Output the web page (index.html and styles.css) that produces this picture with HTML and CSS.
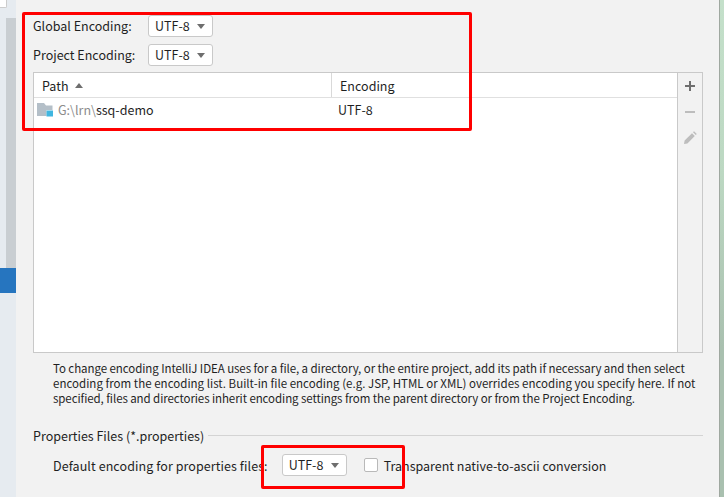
FILE: index.html
```html
<!DOCTYPE html>
<html lang="en">
<head>
<meta charset="utf-8">
<title>File Encodings</title>
<link rel="stylesheet" href="styles.css">
</head>
<body>
<div class="window">
  <aside class="sidebar">
    <div class="corner-box"></div>
    <div class="side-scroll"></div>
    <div class="side-selected"></div>
  </aside>
  <main class="panel">
    <div class="enc-row first">
      <span class="enc-label">Global Encoding:</span>
      <span class="combo"><span>UTF-8</span><i class="caret"></i></span>
    </div>
    <div class="enc-row second">
      <span class="enc-label">Project Encoding:</span>
      <span class="combo"><span>UTF-8</span><i class="caret"></i></span>
    </div>
    <section class="table-box">
      <div class="table">
        <div class="thead">
          <div class="th col-path">Path <i class="sort-up"></i></div>
          <div class="th col-enc">Encoding</div>
        </div>
        <div class="tr">
          <div class="td col-path">
            <svg class="folder" width="16" height="16" viewBox="0 0 16 16">
              <path d="M0 1h7l2 2.500h6.500V8H9.500v6H0z" fill="#b4bfc8"/>
              <rect x="9.500" y="8.500" width="6.500" height="6" fill="#40b6e0"/>
            </svg>
            <span><span class="dim">G:\lrn\</span>ssq-demo</span>
          </div>
          <div class="td col-enc">UTF-8</div>
        </div>
      </div>
      <div class="toolbar">
        <svg class="tool" width="16" height="16" viewBox="0 0 16 16"><path d="M7 3h2v4h4v2H9v4H7V9H3V7h4z" fill="#6e6e6e"/></svg>
        <svg class="tool" width="16" height="16" viewBox="0 0 16 16"><rect x="3" y="7" width="10" height="2" fill="#bdbdbd"/></svg>
        <svg class="tool" width="16" height="16" viewBox="0 0 16 16"><path d="M2 14l.6-3.400L10 3.200l2.800 2.800L5.400 13.400zM11 2.200l1-1 2.800 2.800-1 1z" fill="#bdbdbd"/></svg>
      </div>
    </section>
    <div class="help">
      <div class="line-a">To change encoding IntelliJ IDEA uses for a file, a directory, or the entire project, add its path if necessary and then select</div>
      <div class="line-b">encoding from the encoding list. Built-in file encoding (e.g. JSP, HTML or XML) overrides encoding you specify here. If not</div>
      <div class="line-c">specified, files and directories inherit encoding settings from the parent directory or from the Project Encoding.</div>
    </div>
    <div class="group-title"><span>Properties Files (*.properties)</span><div class="rule"></div></div>
    <div class="props-row">
      <span class="props-label">Default encoding for properties files:</span>
      <span class="combo"><span>UTF-8</span><i class="caret"></i></span>
      <span class="check"></span>
      <span>Transparent native-to-ascii conversion</span>
    </div>
  </main>
  <div class="edge"></div>
  <div class="mark mark-top"></div>
  <div class="mark mark-bottom"></div>
</div>
</body>
</html>
```
FILE: styles.css
```css
* { box-sizing: border-box; }
html, body { margin: 0; height: 100%; }
body { font-family: "Noto Sans CJK SC", "Noto Sans", sans-serif; font-size: 12.5px; color: #1f1f1f; background: #f2f2f2; overflow: hidden; }
.window { position: relative; display: flex; width: 724px; height: 497px; }
.sidebar { position: relative; width: 16px; background: #e6ebf0; flex: none; }
.corner-box { position: absolute; left: 0; top: 0; width: 7px; height: 8px; background: #fff; border: 1px solid #ccc; border-left: 0; border-top: 0; border-radius: 0 0 2px 0; }
.side-scroll { position: absolute; left: 6px; top: 18px; width: 10px; height: 257px; background: #c9ced2; }
.side-selected { position: absolute; left: 0; top: 268px; width: 16px; height: 25px; background: #2675bf; }
.panel { flex: none; width: 703px; padding: 0 0 0 17px; }
.enc-row { display: flex; align-items: center; height: 22px; margin-bottom: 7px; }
.enc-row.first { margin-top: 15px; }
.enc-row.second { margin-bottom: 6px; }
.enc-label { width: 115px; padding-bottom: 2px; }
.combo { display: inline-flex; align-items: center; justify-content: space-between; width: 65px; height: 22px; padding: 0 7px 2px 6px; background: #fff; border: 1px solid #c9c9c9; border-radius: 3px; }
.caret { width: 0; height: 0; margin-top: 2px; border-left: 4.5px solid transparent; border-right: 4.5px solid transparent; border-top: 5px solid #6e6e6e; }
.table-box { display: flex; width: 670px; height: 281px; border: 1px solid #c9c9c9; }
.table { flex: 1; background: #fff; }
.thead { display: flex; height: 25px; border-bottom: 1px solid #e0e0e0; }
.th { display: flex; align-items: center; height: 24px; padding-left: 8px; }
.thead .col-path { width: 298px; border-right: 1px solid #d9d9d9; gap: 5px; }
.sort-up { width: 0; height: 0; border-left: 4.5px solid transparent; border-right: 4.5px solid transparent; border-bottom: 5px solid #6e6e6e; margin-left: 2px; }
.tr { display: flex; height: 23px; align-items: center; }
.td.col-path { width: 298px; display: flex; align-items: center; padding-left: 3px; white-space: pre; }
.td.col-enc { padding-left: 6px; }
.folder { margin-right: 5px; flex: none; }
.dim { color: #8c8c8c; }
.toolbar { flex: none; width: 25px; border-left: 1px solid #c9c9c9; display: flex; flex-direction: column; align-items: center; padding-top: 5px; gap: 10px; }
.tool { display: block; }
.help { margin: 8px 0 0 20px; font-size: 11.5px; line-height: 15px; white-space: nowrap; }
.line-a { letter-spacing: -0.07px; }
.line-b { letter-spacing: 0.02px; }
.line-c { letter-spacing: -0.08px; }
.group-title { display: flex; align-items: center; gap: 4px; width: 670px; margin-top: 20px; height: 18px; }
.rule { flex: 1; height: 1px; background: #d4d4d4; }
.props-row { display: flex; align-items: center; height: 22px; margin-top: 10px; padding-left: 20px; }
.props-label { letter-spacing: 0.08px; }
.props-row .combo { margin-left: 14px; }
.check { width: 14px; height: 14px; margin: 0 6px 0 17px; background: #fff; border: 1px solid #b9b9b9; border-radius: 2px; }
.edge { position: absolute; right: 0; top: 0; width: 5px; height: 497px; border-left: 1px solid #9fa8a0; background: linear-gradient(#c4e0ca 0, #bcd8c2 35%, #a9c0af 70%, #a9c0af 100%); }
.mark { position: absolute; border: 3px solid #f00; border-radius: 2px; pointer-events: none; }
.mark-top { left: 22px; top: 12px; width: 450px; height: 119px; }
.mark-bottom { left: 261px; top: 445px; width: 144px; height: 44px; }
```
